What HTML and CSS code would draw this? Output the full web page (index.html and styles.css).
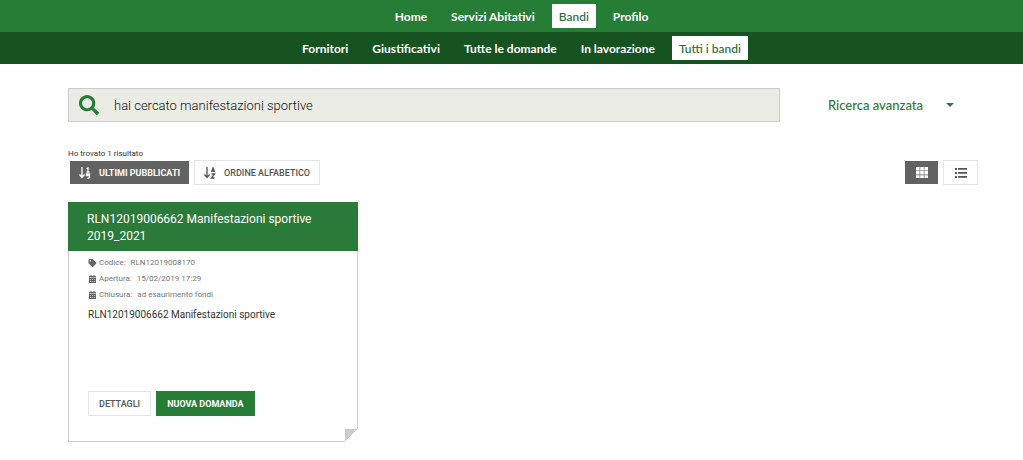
FILE: index.html
```html
<!DOCTYPE html>
<html lang="it">
<head>
<meta charset="utf-8">
<meta name="viewport" content="width=device-width, initial-scale=1">
<title>Tutti i bandi</title>
<link rel="stylesheet" href="styles.css">
</head>
<body>
<header>
  <nav class="nav nav-main" aria-label="Principale">
    <a href="#">Home</a>
    <a href="#">Servizi Abitativi</a>
    <a href="#" class="active" aria-current="page">Bandi</a>
    <a href="#">Profilo</a>
  </nav>
  <nav class="nav nav-sub" aria-label="Bandi">
    <a href="#">Fornitori</a>
    <a href="#">Giustificativi</a>
    <a href="#">Tutte le domande</a>
    <a href="#">In lavorazione</a>
    <a href="#" class="active" aria-current="page">Tutti i bandi</a>
  </nav>
</header>
<main class="page">
  <form class="search">
    <label class="search-box">
      <svg class="search-icon" viewBox="0 0 512 512" role="img" aria-label="Cerca"><path d="M505 442.7L405.3 343c-4.500-4.500-10.600-7-17-7H372c27.600-35.300 44-79.700 44-128C416 93.100 322.900 0 208 0S0 93.100 0 208s93.100 208 208 208c48.300 0 92.700-16.400 128-44v16.300c0 6.400 2.500 12.500 7 17l99.700 99.700c9.400 9.400 24.600 9.400 33.900 0l28.300-28.300c9.400-9.400 9.400-24.600.1-34zM208 336c-70.700 0-128-57.200-128-128 0-70.700 57.200-128 128-128 70.700 0 128 57.200 128 128 0 70.700-57.200 128-128 128z"/></svg>
      <input class="search-input" type="text" value="hai cercato manifestazioni sportive">
    </label>
    <button type="button" class="advanced">Ricerca avanzata
      <svg class="caret" viewBox="0 0 8 4" aria-hidden="true"><path d="M0 0h8L4 4z"/></svg>
    </button>
  </form>

  <p class="count">Ho trovato 1 risultato</p>
  <div class="toolbar">
    <div class="group">
      <button type="button" class="btn btn-dark sort">
        <svg class="sort-icon" viewBox="0 0 12 12" aria-hidden="true"><path d="M3 0v10M.5 7.500L3 10.500l2.500-3"/><path d="M7.500 1.500L9 1v4M7.500 5h3M10.500 8.500h-3V7h3v3.500l-2 1"/></svg>
        Ultimi pubblicati
      </button>
      <button type="button" class="btn btn-light sort">
        <svg class="sort-icon" viewBox="0 0 12 12" aria-hidden="true"><path d="M3 0v10M.5 7.500L3 10.500l2.500-3"/><path d="M7.500 5L9 1l1.500 4M8 4h2M7.500 7h3l-3 4h3"/></svg>
        Ordine alfabetico
      </button>
    </div>
    <div class="group">
      <button type="button" class="btn btn-dark view" aria-label="Vista griglia">
        <svg class="view-icon" viewBox="0 0 12 12" aria-hidden="true"><path d="M0 0h3.600v3.500H0zM4.200 0h3.600v3.500H4.200zM8.400 0H12v3.500H8.400zM0 4.100h3.600v3.500H0zM4.200 4.100h3.600v3.500H4.200zM8.400 4.100H12v3.500H8.400zM0 8.200h3.600V11H0zM4.200 8.200h3.600V11H4.200zM8.400 8.200H12V11H8.400z"/></svg>
      </button>
      <button type="button" class="btn btn-light view" aria-label="Vista elenco">
        <svg class="view-icon" viewBox="0 0 12 12" aria-hidden="true"><path d="M0 1h2v2H0zM3 1h9v1.700H3zM0 5h2v2H0zM3 5h9v1.700H3zM0 9h2v2H0zM3 9h9v1.700H3z"/></svg>
      </button>
    </div>
  </div>

  <section class="cards">
    <article class="card">
      <h2 class="card-title">RLN12019006662 Manifestazioni sportive 2019_2021</h2>
      <div class="card-body">
        <ul class="meta">
          <li><svg class="meta-icon" viewBox="0 0 512 512" aria-hidden="true"><path d="M0 252V48C0 21 21 0 48 0h204a48 48 0 0 1 34 14l212 212c19 19 19 49 0 68L294 498c-19 19-49 19-68 0L14 286A48 48 0 0 1 0 252zM112 64c-26 0-48 22-48 48s22 48 48 48 48-22 48-48-22-48-48-48z"/></svg><span>Codice:</span><span class="value">RLN12019008170</span></li>
          <li><svg class="meta-icon" viewBox="0 0 16 16" aria-hidden="true"><path fill-rule="evenodd" d="M1 5V3q0-1 1-1h2V0h2v2h4V0h2v2h2q1 0 1 1v2zM1 6h14v9q0 1-1 1H2q-1 0-1-1zM3.500 8v1.500H5V8zM7.300 8v1.500h1.500V8zM11 8v1.500h1.500V8zM3.500 12v1.500H5V12zM7.300 12v1.500h1.500V12zM11 12v1.500h1.500V12z"/></svg><span>Apertura:</span><span class="value">15/02/2019 17:29</span></li>
          <li><svg class="meta-icon" viewBox="0 0 16 16" aria-hidden="true"><path fill-rule="evenodd" d="M1 5V3q0-1 1-1h2V0h2v2h4V0h2v2h2q1 0 1 1v2zM1 6h14v9q0 1-1 1H2q-1 0-1-1zM3.500 8v1.500H5V8zM7.300 8v1.500h1.500V8zM11 8v1.500h1.500V8zM3.500 12v1.500H5V12zM7.300 12v1.500h1.500V12zM11 12v1.500h1.500V12z"/></svg><span>Chiusura:</span><span class="value">ad esaurimento fondi</span></li>
        </ul>
        <p class="summary">RLN12019006662 Manifestazioni sportive</p>
        <div class="actions">
          <button type="button" class="btn btn-light">Dettagli</button>
          <button type="button" class="btn btn-green">Nuova domanda</button>
        </div>
      </div>
    </article>
  </section>
</main>
</body>
</html>
```
FILE: styles.css
```css
* { box-sizing: border-box; }
body {
  margin: 0;
  background: #fff;
  color: #333;
  font-family: Roboto, "Noto Sans", sans-serif;
}
button, input { font: inherit; }
button { cursor: pointer; }
svg { fill: currentColor; flex: none; }

.nav, .advanced { font-family: Lato, Roboto, sans-serif; }
.nav {
  display: flex;
  justify-content: center;
  align-items: center;
  gap: 10px;
  min-height: 32px;
  padding: 4px 0 4px 20px;
}
.nav-main { background: #257d36; }
.nav-sub { background: #165321; }
.nav a {
  padding: 2px 7px 0;
  color: #fff;
  font-size: 12px;
  font-weight: 700;
  line-height: 22px;
  text-decoration: none;
}
.nav a.active {
  background: #fff;
  color: #2a6a38;
  font-weight: 500;
}

.page { padding: 24px 45px 18px 68px; }
.search { display: flex; align-items: stretch; }
.search-box {
  display: flex;
  flex: 1;
  align-items: center;
  gap: 15px;
  height: 34px;
  padding: 0 10px;
  border: 1px solid #ccc;
  background: #ecece6;
}
.search-icon { width: 20px; height: 20px; color: #257d36; }
.search-input {
  flex: 1;
  min-width: 0;
  padding: 0;
  border: 0;
  outline: 0;
  background: transparent;
  color: #111;
  font-size: 13px;
  font-weight: 300;
}
.advanced {
  display: flex;
  flex: 0 0 198px;
  align-items: center;
  justify-content: space-between;
  padding: 0 24px 0 48px;
  border: 0;
  background: none;
  color: #2a7a38;
  font-size: 13px;
  font-weight: 500;
}
.caret { width: 8px; height: 4px; }

.count {
  margin: 26px 0 0;
  font-size: 8px;
  line-height: 12px;
}
.toolbar {
  display: flex;
  justify-content: space-between;
  padding-left: 1px;
}
.group { display: flex; gap: 4px; }
.btn {
  display: flex;
  align-items: center;
  justify-content: center;
  height: 25px;
  padding: 1px 10px 0;
  border: 1px solid transparent;
  font-size: 9px;
  font-weight: 700;
  text-transform: uppercase;
}
.btn-dark { background: #626262; background-clip: padding-box; color: #fff; }
.btn-light { border-color: #e2e6e6; background: #fff; color: #555; font-weight: 500; }
.btn-green { background: #257d36; color: #fff; }
.sort { gap: 8px; padding: 0 9px; }
.sort-icon {
  width: 12px;
  height: 12px;
  fill: none;
  stroke: currentColor;
  stroke-width: 1.3;
}
.view { width: 35px; padding: 0; }
.view-icon { width: 12px; height: 12px; }

.cards {
  display: grid;
  grid-template-columns: repeat(auto-fill, minmax(290px, 1fr));
  gap: 20px;
  margin-top: 17px;
}
.card {
  position: relative;
  display: flex;
  flex-direction: column;
  min-height: 240px;
  border: 1px solid #ccc;
  border-top: 0;
}
.card::after {
  content: "";
  position: absolute;
  right: -1px;
  bottom: -1px;
  width: 13px;
  height: 13px;
  background: linear-gradient(135deg, #ccc 50%, #fff 50%);
}
.card-title {
  margin: 0 -1px;
  padding: 9px 19px 6px;
  background: #2a7b39;
  color: #fff;
  font-size: 12px;
  font-weight: 400;
  line-height: 17px;
}
.card-body {
  display: flex;
  flex: 1;
  flex-direction: column;
  padding: 4px 19px 25px;
}
.meta {
  margin: 0;
  padding: 0;
  list-style: none;
  color: #777;
  font-size: 8px;
  line-height: 16px;
}
.meta li { display: flex; align-items: center; gap: 2px; }
.meta-icon { width: 9px; height: 8px; color: #666; }
.value { margin-left: 3px; }
.summary {
  margin: 4px 0 0;
  font-size: 10px;
  line-height: 16px;
}
.actions { display: flex; gap: 5px; margin-top: auto; }
```
